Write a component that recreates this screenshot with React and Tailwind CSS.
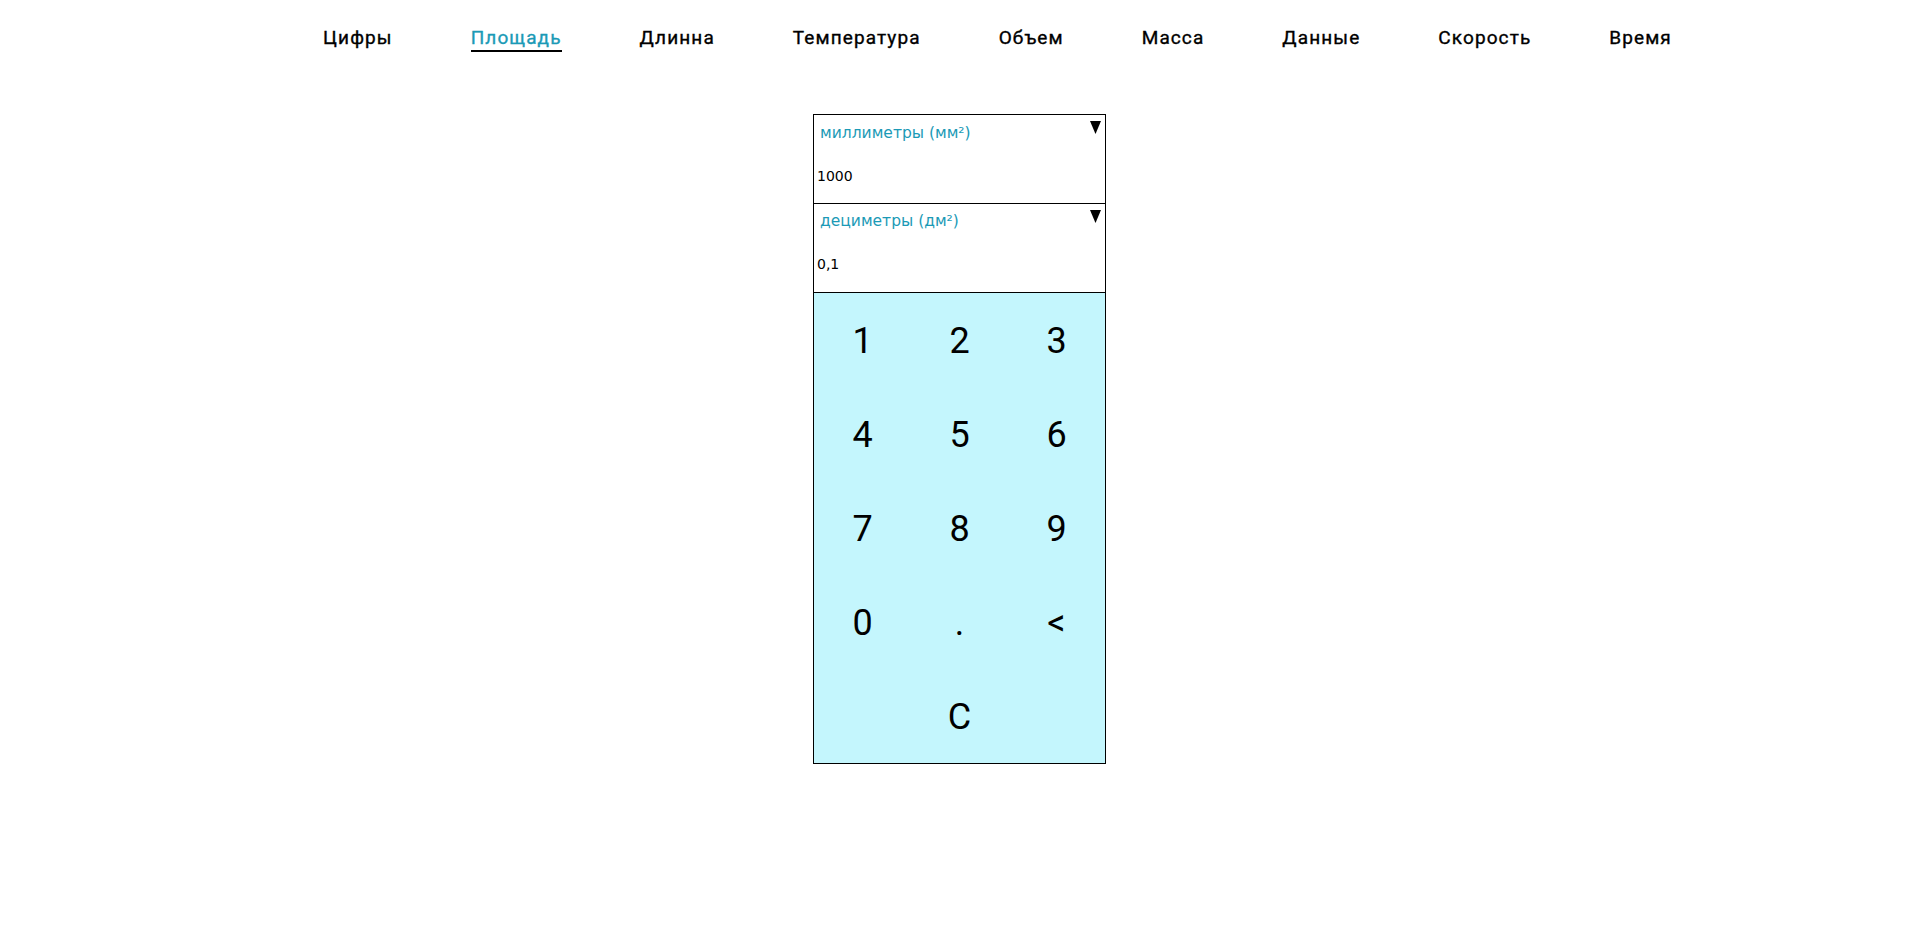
import React from 'react'

const TABS = ['Цифры', 'Площадь', 'Длинна', 'Температура', 'Объем', 'Масса', 'Данные', 'Скорость', 'Время']
const KEYS = ['1', '2', '3', '4', '5', '6', '7', '8', '9', '0', '.', '<', '', 'C', '']

const FIELD_FONT = { fontFamily: '"DejaVu Sans", Verdana, sans-serif' }

function Arrow() {
  return (
    <svg className="absolute right-[4px] top-[6px] w-[11px] h-[13px]" viewBox="0 0 11 13">
      <polygon points="0,0 11,0 5.5,13" fill="#000" />
    </svg>
  )
}

function UnitField({ label, value, top }) {
  return (
    <div className="relative h-[89px] border-b border-black">
      <Arrow />
      <div className={`${top} pl-[6px] text-[15.5px] leading-[17px] text-[#1b9ab6]`} style={FIELD_FONT}>
        {label}
      </div>
      <div className="mt-[26px] pl-[3px] text-[14px] leading-[17px] text-black" style={FIELD_FONT}>
        {value}
      </div>
    </div>
  )
}

export default function App() {
  return (
    <div className="min-h-screen bg-white" style={{ fontFamily: 'Roboto, sans-serif' }}>
      <nav className="flex justify-center gap-[78px] pl-[76px] pt-[25px]">
        {TABS.map((t) => (
          <a
            key={t}
            className={
              t === 'Площадь'
                ? 'text-[19px] leading-[25px] font-normal tracking-[1.1px] text-[#1b9ab6] border-b-2 border-black'
                : 'text-[19px] leading-[25px] font-normal tracking-[1.1px] text-black border-b-2 border-transparent'
            }
            style={{ WebkitTextStroke: '0.35px currentColor' }}
          >
            {t}
          </a>
        ))}
      </nav>

      <div className="mx-auto mt-[62px] w-[293px] border border-black">
        <UnitField label="миллиметры (мм²)" value="1000" top="pt-[10px]" />
        <UnitField label="дециметры (дм²)" value="0,1" top="pt-[9px]" />
        <div className="grid grid-cols-3 grid-rows-5 h-[470px] bg-[#c4f6fd]">
          {KEYS.map((k, i) => (
            <button key={i} className="flex items-center justify-center pt-[2px] text-[36px] text-black">
              {k}
            </button>
          ))}
        </div>
      </div>
    </div>
  )
}
